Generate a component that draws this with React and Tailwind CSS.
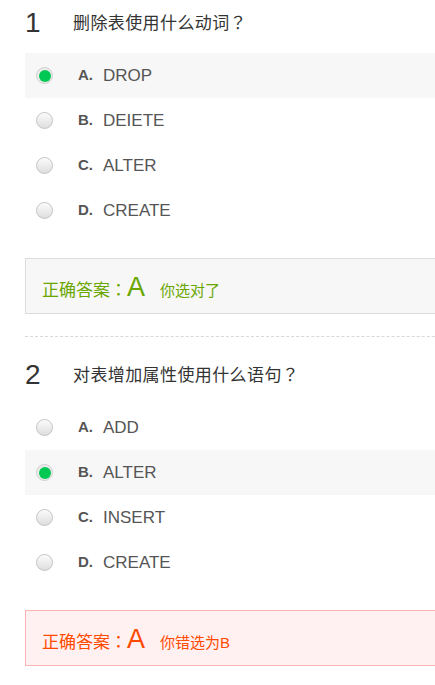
const questions = [
  {
    no: 1,
    title: "删除表使用什么动词",
    options: [
      { key: "A", text: "DROP" },
      { key: "B", text: "DEIETE" },
      { key: "C", text: "ALTER" },
      { key: "D", text: "CREATE" },
    ],
    answer: "A",
    picked: "A",
  },
  {
    no: 2,
    title: "对表增加属性使用什么语句",
    options: [
      { key: "A", text: "ADD" },
      { key: "B", text: "ALTER" },
      { key: "C", text: "INSERT" },
      { key: "D", text: "CREATE" },
    ],
    answer: "A",
    picked: "B",
  },
];

// fullwidth punctuation centred in its box, as in the screenshot
const punct = { fontFamily: '"Noto Sans CJK JP", "Noto Sans CJK SC", sans-serif' };

function Radio({ checked }) {
  if (checked) {
    return (
      <span className="flex h-[17px] w-[17px] items-center justify-center rounded-full border border-[#cfcfcf] bg-[#ececec]">
        <span className="h-[12px] w-[12px] rounded-full bg-[#00c853]" />
      </span>
    );
  }
  return (
    <span className="h-[17px] w-[17px] rounded-full border border-[#c4c4c4] bg-gradient-to-b from-[#fbfbfb] to-[#dedede]" />
  );
}

function Question({ q }) {
  const right = q.picked === q.answer;
  return (
    <div>
      <div className="flex h-[46px] items-center">
        <span className="w-[48px] text-[28px] leading-none text-[#333]">{q.no}</span>
        <span className="text-[17px] tracking-[0.4px] text-[#333]">
          {q.title}
          <span style={punct}>？</span>
        </span>
      </div>

      <div className="mt-[7px]">
        {q.options.map((o) => (
          <div
            key={o.key}
            className={`flex h-[45px] items-center pl-[11px] ${o.key === q.picked ? "bg-[#f7f7f7]" : ""}`}
          >
            <Radio checked={o.key === q.picked} />
            <span className="ml-[25px] w-[25px] text-[15px] font-bold text-[#555]">{o.key}.</span>
            <span className="text-[17px] text-[#555]">{o.text}</span>
          </div>
        ))}
      </div>

      <div
        className={`mt-[25px] flex h-[56px] items-baseline border pl-[16px] pt-[15px] ${
          right ? "border-[#dcdcdc] bg-[#f7f7f7] text-[#6aa600]" : "border-[#fab4b4] bg-[#fff1f1] text-[#ff4a00]"
        }`}
      >
        <span className="text-[17px] leading-[26px]">
          正确答案<span style={punct}>：</span>
        </span>
        <span className="text-[27px] leading-[26px]">{q.answer}</span>
        <span className="ml-[15px] text-[15px] leading-[26px]">{right ? "你选对了" : `你错选为${q.picked}`}</span>
      </div>
    </div>
  );
}

export default function App() {
  return (
    <div
      className="h-[685px] w-[435px] overflow-hidden bg-white"
      style={{ fontFamily: '"Liberation Sans", "Noto Sans CJK SC", sans-serif' }}
    >
      <div className="w-[480px] pl-[25px]">
        <Question q={questions[0]} />
        <div className="mt-[22px] mb-[15px] border-t border-dashed border-[#d8d8d8]" />
        <Question q={questions[1]} />
      </div>
    </div>
  );
}
